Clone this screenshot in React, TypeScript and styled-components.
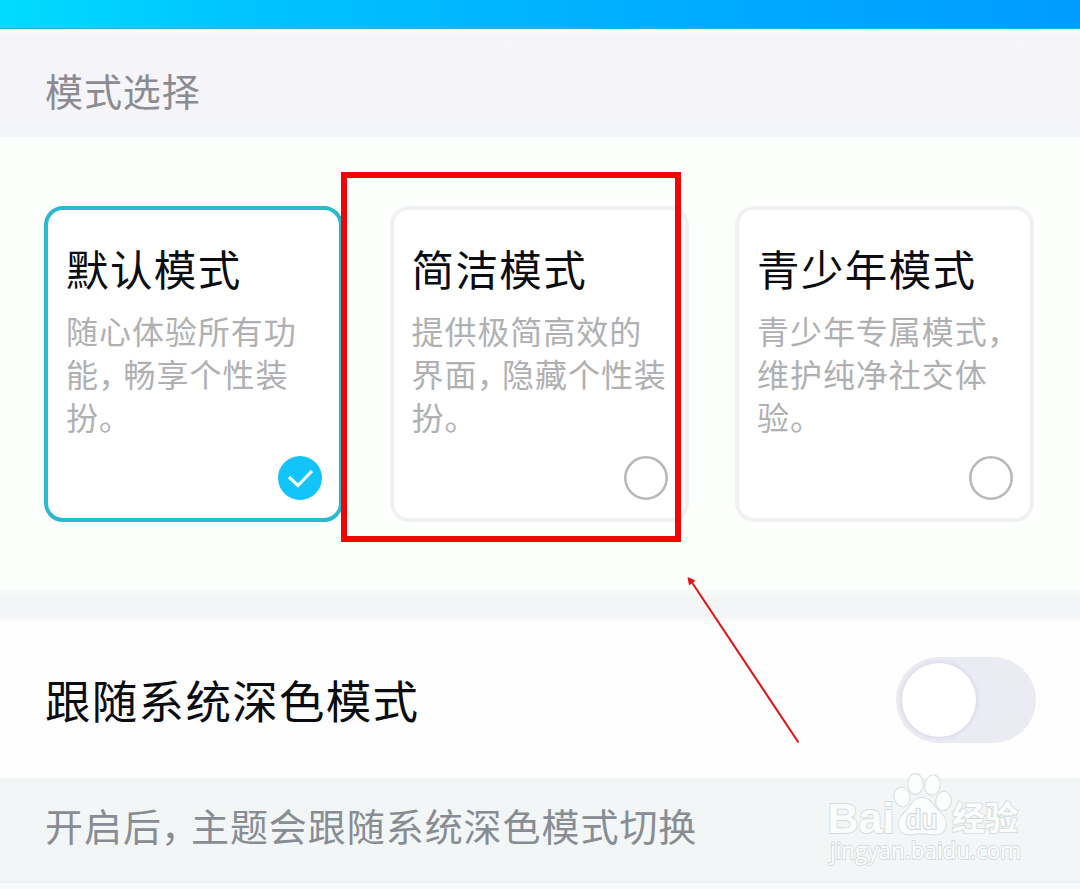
import React from 'react'
import styled, { createGlobalStyle } from 'styled-components'

const GlobalStyle = createGlobalStyle`
  * {
    box-sizing: border-box;
  }

  body {
    margin: 0;
    background: #fff;
    font-family: "Noto Sans CJK SC", sans-serif;
  }
`

const Page = styled.div`
  position: relative;
  width: 1080px;
  height: 889px;
  overflow: hidden;
  display: flex;
  flex-direction: column;
`

const TopBar = styled.div`
  flex: none;
  height: 29px;
  background: linear-gradient(90deg, #00dcff 0%, #00c4ff 22%, #00b0ff 55%, #009cff 100%);
  border-bottom: 1px solid #22b4dc;
`

const SectionHeader = styled.div`
  flex: none;
  height: 108px;
  padding: 0 0 0 45px;
  background: linear-gradient(180deg, #fafdfb 0, #f6f5f9 7px, #f4f5fa 100%);
  color: #8b8b90;
  font-size: 38px;
  letter-spacing: 0.9px;
  line-height: 121px;
`

const CardList = styled.div`
  flex: none;
  display: flex;
  gap: 46.5px;
  height: 453px;
  padding: 69px 44px 0;
  background: #fcfffb;
`

const Card = styled.div<{ $selected?: boolean }>`
  display: flex;
  flex-direction: column;
  width: 299px;
  height: 316px;
  padding: 30px 0 18px 18px;
  border: 4px solid ${p => (p.$selected ? '#2bb9d0' : '#f1f1f4')};
  border-radius: 19px;
  background: #fefffe;
`

const CardTitle = styled.div`
  color: #0b0c12;
  font-size: 42.5px;
  letter-spacing: 1.4px;
  line-height: 56px;
  white-space: nowrap;
`

const CardText = styled.div`
  margin-top: 13px;
  color: #b0b0b3;
  font-size: 32px;
  letter-spacing: 0.95px;
  line-height: 43px;
  white-space: nowrap;
`

const Comma = styled.span`
  font-feature-settings: "halt" 1;
  margin-left: -0.02em;
  margin-right: 0.26em;
`

const RadioIcon = styled.svg`
  width: 44px;
  height: 44px;
  margin: auto 16.6px 0 auto;
`

const Divider = styled.div`
  flex: none;
  height: 32px;
  background: linear-gradient(180deg, #fcfdfc 0, #f5f6f6 4px, #f4f5f7 27px, #fbfbfc 100%);
`

const SwitchRow = styled.div`
  flex: none;
  display: flex;
  align-items: center;
  justify-content: space-between;
  height: 156px;
  padding: 0 44px 0 45px;
  background: #fefefe;
`

const RowTitle = styled.div`
  padding-bottom: 2px;
  color: #0b0c12;
  font-size: 45.5px;
  letter-spacing: 1.3px;
`

const Switch = styled.div`
  width: 140px;
  height: 86px;
  padding: 6px;
  border-radius: 43px;
  background: #ebebf4;
`

const Knob = styled.div`
  width: 74px;
  height: 74px;
  border-radius: 50%;
  background: #fff;
  box-shadow: 0 0 5px rgba(80, 80, 120, 0.18);
`

const Footer = styled.div`
  flex: none;
  height: 105px;
  padding-left: 45px;
  background: #f2f6f7;
  border-bottom: 2px solid #eef2f4;
  color: #888c93;
  font-size: 38px;
  letter-spacing: 0.95px;
  line-height: 93px;
`

const BottomEdge = styled.div`
  flex: 1;
  background: #f8fbfb;
`

const Frame = styled.div`
  position: absolute;
  left: 341px;
  top: 172px;
  width: 340px;
  height: 370px;
  border: 6px solid #f20505;
`

const Overlay = styled.svg`
  position: absolute;
  left: 0;
  top: 0;
`

interface Mode {
  name: string
  lines: string[]
  selected?: boolean
}

const modes: Mode[] = [
  { name: '默认模式', lines: ['随心体验所有功', '能，畅享个性装', '扮。'], selected: true },
  { name: '简洁模式', lines: ['提供极简高效的', '界面，隐藏个性装', '扮。'] },
  { name: '青少年模式', lines: ['青少年专属模式，', '维护纯净社交体', '验。'] },
]

const Text: React.FC<{ value: string }> = ({ value }) => {
  const [head, tail] = value.split('，')
  return <>{head}{tail !== undefined && <Comma>，</Comma>}{tail}</>
}

const Radio: React.FC<{ selected?: boolean }> = ({ selected }) => {
  return <RadioIcon viewBox="0 0 44 44" fill="none">
    {selected
      ? <>
        <circle cx="22" cy="22" r="22" fill="#12c4fa" />
        <path d="M11 21 L20 29.5 L34 15" stroke="#f2fdff" strokeWidth="3.2" />
      </>
      : <circle cx="22" cy="22" r="20.7" stroke="#b9b9bc" strokeWidth="2.6" />}
  </RadioIcon>
}

const Watermark: React.FC = () => {
  return <g fill="#fcfefe" stroke="#d6dadc" strokeWidth="1.8" paintOrder="stroke">
    <text x="827.5" y="833" fontFamily="Liberation Sans, sans-serif" fontWeight="700" fontSize="43" textLength="67">Bai</text>
    <ellipse cx="902" cy="797" rx="7.5" ry="9.5" transform="rotate(-12 902 797)" />
    <ellipse cx="915.5" cy="784" rx="7.3" ry="10" />
    <ellipse cx="932.5" cy="785" rx="7.3" ry="9.7" transform="rotate(10 932.5 785)" />
    <ellipse cx="943.5" cy="801" rx="7.3" ry="9.3" transform="rotate(8 943.5 801)" />
    <path d="M922 798 C929 798 932 803 936 808 C941 814 947 818 946 825 C945 833 938 836 930 834 C924 833 920 833 914 834 C905 836 899 832 898.500 825 C898 817 905 813 909 808 C913 802 915 798 922 798 Z" />
    <text x="906" y="829" fontFamily="Liberation Sans, sans-serif" fontSize="27" textLength="31" strokeWidth="2.6">du</text>
    <text x="952" y="829.500" fontFamily="Noto Sans CJK SC, sans-serif" fontWeight="700" fontSize="33" textLength="66">经验</text>
    <text x="830" y="859" fontFamily="Open Sans, sans-serif" fontSize="23" textLength="191" lengthAdjust="spacingAndGlyphs">jingyan.baidu.com</text>
  </g>
}

const App: React.FC = () => {
  return <Page>
    <GlobalStyle />
    <TopBar />
    <SectionHeader>模式选择</SectionHeader>
    <CardList>
      {modes.map(mode => <Card key={mode.name} $selected={mode.selected}>
        <CardTitle>{mode.name}</CardTitle>
        <CardText>
          {mode.lines.map(line => <div key={line}><Text value={line} /></div>)}
        </CardText>
        <Radio selected={mode.selected} />
      </Card>)}
    </CardList>
    <Divider />
    <SwitchRow>
      <RowTitle>跟随系统深色模式</RowTitle>
      <Switch><Knob /></Switch>
    </SwitchRow>
    <Footer><Text value="开启后，主题会跟随系统深色模式切换" /></Footer>
    <BottomEdge />
    <Frame />
    <Overlay width="1080" height="889" viewBox="0 0 1080 889">
      <path d="M691 581 L798.500 742.500" stroke="#e01212" strokeWidth="2" />
      <path d="M687.500 577 L695.500 580.500 L689 585.500 Z" fill="#e01212" />
      <Watermark />
    </Overlay>
  </Page>
}

export default App
